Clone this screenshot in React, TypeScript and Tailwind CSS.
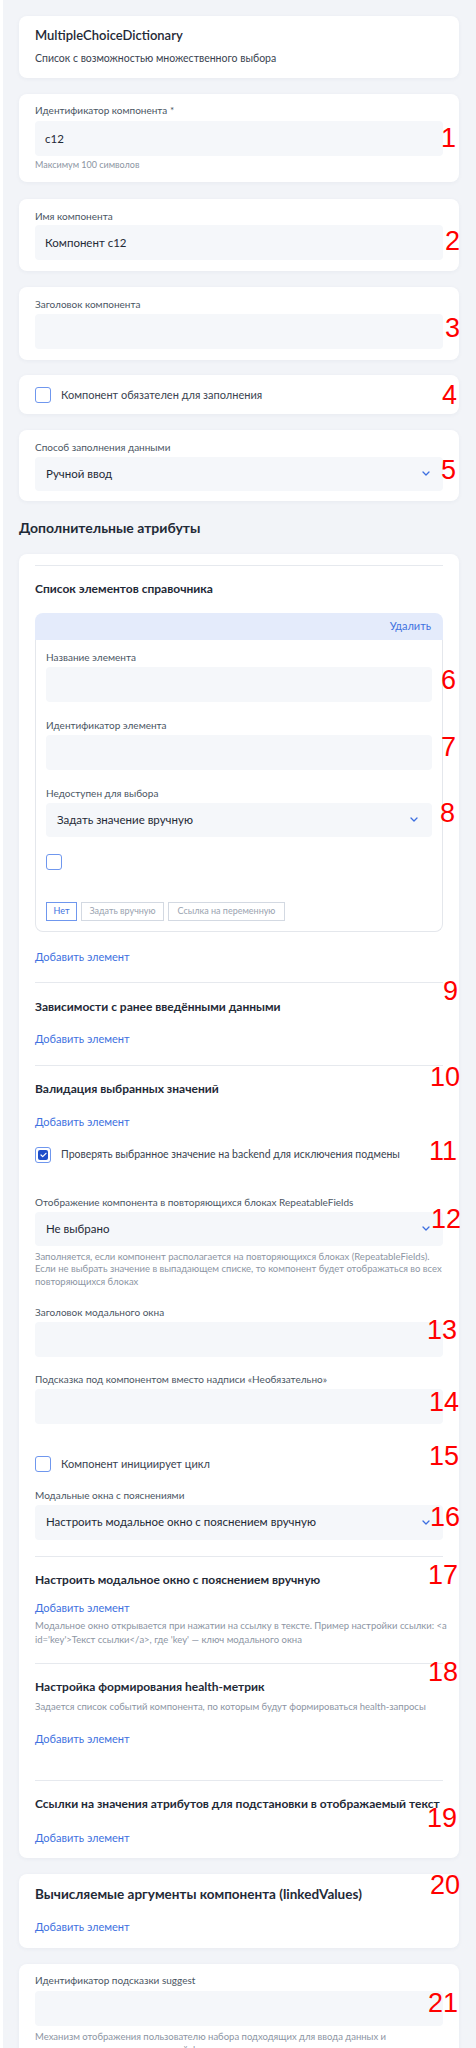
import React from "react";

function Label({ children, className = "" }: { children: React.ReactNode; className?: string }) {
  return <div className={"text-[10px] leading-[14px] text-[#4a5563] " + className}>{children}</div>;
}

function Input({ value, className = "" }: { value?: string; className?: string }) {
  return (
    <div className={"flex h-[35px] items-center rounded-[4px] bg-[#f5f7fa] px-[10px] text-[11.5px] text-[#1f2a37] " + className}>
      {value}
    </div>
  );
}

function Chevron() {
  return (
    <svg width="8" height="5" viewBox="0 0 8 5" fill="none">
      <path d="M1 1l3 3 3-3" stroke="#3d6fe0" strokeWidth="1.3" strokeLinecap="round" strokeLinejoin="round" />
    </svg>
  );
}

function Select({ value, className = "" }: { value: string; className?: string }) {
  return (
    <div className={"flex h-[34px] items-center justify-between rounded-[4px] bg-[#f5f7fa] pl-[11px] pr-[13px] text-[11.5px] text-[#1f2a37] " + className}>
      <span>{value}</span>
      <Chevron />
    </div>
  );
}

function Checkbox({ checked = false }: { checked?: boolean }) {
  return (
    <div className="flex h-[16px] w-[16px] shrink-0 items-center justify-center rounded-[3px] border border-[#6f97ee] bg-white">
      {checked && (
        <div className="flex h-[10px] w-[10px] items-center justify-center rounded-[2px] bg-[#1f4fc9]">
          <svg width="7" height="6" viewBox="0 0 7 6" fill="none">
            <path d="M1 3l1.7 1.7L6 1.3" stroke="white" strokeWidth="1.2" strokeLinecap="round" strokeLinejoin="round" />
          </svg>
        </div>
      )}
    </div>
  );
}

function AddLink({ className = "" }: { className?: string }) {
  return <div className={"text-[11px] leading-[16px] text-[#3f72e0] " + className}>Добавить элемент</div>;
}

function Heading({ children, className = "" }: { children: React.ReactNode; className?: string }) {
  return <div className={"text-[12px] font-bold leading-[16px] text-[#1f2a37] " + className}>{children}</div>;
}

function Hint({ children, className = "" }: { children: React.ReactNode; className?: string }) {
  return <div className={"text-[9.5px] text-[#8c95a3] " + className}>{children}</div>;
}

function Divider({ className = "" }: { className?: string }) {
  return <div className={"h-px bg-[#e6e9ee] " + className} />;
}

function Card({ children, className = "" }: { children: React.ReactNode; className?: string }) {
  return (
    <div className={"rounded-[8px] bg-white px-4 shadow-[0_1px_4px_rgba(30,50,90,0.05)] " + className}>{children}</div>
  );
}

export default function App() {
  return (
    <div className="relative min-h-[2048px] bg-white pl-[3px] font-[Lato,'Noto_Sans',sans-serif]">
      <div className="min-h-[2048px] bg-[#f2f4f8] pb-10 pl-4 pr-[17px] pt-4">
        {/* Card 1 */}
        <Card className="pb-[13px] pt-[10px]">
          <div className="text-[13px] font-semibold leading-[18px] text-[#1f2a37]">MultipleChoiceDictionary</div>
          <div className="mt-[7px] text-[10.5px] leading-[14px] text-[#3a4350]">Список с возможностью множественного выбора</div>
        </Card>

        {/* Card 2 */}
        <Card className="mt-4 pb-[11px] pt-[9px]">
          <Label>Идентификатор компонента *</Label>
          <Input value="c12" className="mt-[4px]" />
          <div className="mt-[3px] text-[9px] leading-[12px] text-[#8c95a3]">Максимум 100 символов</div>
        </Card>

        {/* Card 3 */}
        <Card className="mt-[17px] pb-[11px] pt-[10px]">
          <Label>Имя компонента</Label>
          <Input value="Компонент c12" className="mt-[2px]" />
        </Card>

        {/* Card 4 */}
        <Card className="mt-4 pb-[11px] pt-[10px]">
          <Label>Заголовок компонента</Label>
          <Input className="mt-[3px]" />
        </Card>

        {/* Card 5 */}
        <Card className="mt-[15px] flex items-center gap-[10px] pb-[10px] pt-[12px]">
          <Checkbox />
          <span className="text-[11px] text-[#3a4350]">Компонент обязателен для заполнения</span>
        </Card>

        {/* Card 6 */}
        <Card className="mt-4 pb-[10px] pt-[10px]">
          <Label>Способ заполнения данными</Label>
          <Select value="Ручной ввод" className="mt-[3px] h-[33px]" />
        </Card>

        <div className="mt-[17px] text-[14px] font-bold leading-[20px] text-[#1f2a37]">Дополнительные атрибуты</div>

        {/* Big card */}
        <Card className="mt-4 pb-[12px] pt-[11px]">
          <Divider />
          <Heading className="mt-[15px]">Список элементов справочника</Heading>

          <div className="mt-4 rounded-[8px]">
            <div className="flex h-[27px] items-center justify-end rounded-t-[8px] bg-[#e4ebfb] pr-[12px] text-[11px] text-[#3f72e0]">
              Удалить
            </div>
            <div className="rounded-b-[8px] border border-t-0 border-[#e4e7ec] px-[10px] pb-[10px] pt-[10px]">
              <Label>Название элемента</Label>
              <Input className="mt-[3px] h-[34px]" />
              <Label className="mt-4">Идентификатор элемента</Label>
              <Input className="mt-[3px] h-[34px]" />
              <Label className="mt-4">Недоступен для выбора</Label>
              <Select value="Задать значение вручную" className="mt-[3px] pr-[14px]" />
              <div className="mt-[17px]">
                <Checkbox />
              </div>
              <div className="mt-[32px] flex gap-[4px]">
                <div className="flex h-[19px] w-[31px] items-center justify-center border border-[#6f97ee] text-[9px] text-[#3f72e0]">
                  Нет
                </div>
                <div className="flex h-[19px] w-[83px] items-center justify-center border border-[#d3d9e2] text-[9px] text-[#9aa3b0]">
                  Задать вручную
                </div>
                <div className="flex h-[19px] w-[117px] items-center justify-center border border-[#d3d9e2] text-[9px] text-[#9aa3b0]">
                  Ссылка на переменную
                </div>
              </div>
            </div>
          </div>

          <AddLink className="mt-[17px]" />
          <Divider className="mt-[17px]" />

          <Heading className="mt-[16px]">Зависимости с ранее введёнными данными</Heading>
          <AddLink className="mt-[16px]" />
          <Divider className="mt-[18px]" />

          <Heading className="mt-[15px]">Валидация выбранных значений</Heading>
          <AddLink className="mt-[17px]" />
          <div className="mt-[17px] flex items-center gap-[10px]">
            <Checkbox checked />
            <span className="text-[10.5px] text-[#3a4350]">Проверять выбранное значение на backend для исключения подмены</span>
          </div>

          <Label className="mt-[32px]">Отображение компонента в повторяющихся блоках RepeatableFields</Label>
          <Select value="Не выбрано" className="mt-[3px]" />
          <Hint className="mt-[5px] whitespace-nowrap leading-[12.5px]">
            Заполняется, если компонент располагается на повторяющихся блоках (RepeatableFields).
            <br />
            Если не выбрать значение в выпадающем списке, то компонент будет отображаться во всех
            <br />
            повторяющихся блоках
          </Hint>

          <Label className="mt-[17px]">Заголовок модального окна</Label>
          <Input className="mt-[3px] h-[34px]" />
          <Label className="mt-[15px]">Подсказка под компонентом вместо надписи «Необязательно»</Label>
          <Input className="mt-[3px] h-[34px]" />

          <div className="mt-[32px] flex items-center gap-[10px]">
            <Checkbox />
            <span className="text-[11px] text-[#3a4350]">Компонент инициирует цикл</span>
          </div>

          <Label className="mt-[15px]">Модальные окна с пояснениями</Label>
          <Select value="Настроить модальное окно с пояснением вручную" className="mt-[3px] h-[35px]" />
          <Divider className="mt-[16px]" />

          <Heading className="mt-[15px]">Настроить модальное окно с пояснением вручную</Heading>
          <AddLink className="mt-[12px]" />
          <Hint className="mt-[3px] whitespace-nowrap leading-[14px]">
            Модальное окно открывается при нажатии на ссылку в тексте. Пример настройки ссылки: &lt;a
            <br />
            id='key'&gt;Текст ссылки&lt;/a&gt;, где 'key' — ключ модального окна
          </Hint>
          <Divider className="mt-[16px]" />

          <Heading className="mt-[15px]">Настройка формирования health-метрик</Heading>
          <Hint className="mt-[5px] leading-[14px]">Задается список событий компонента, по которым будут формироваться health-запросы</Hint>
          <AddLink className="mt-[17px]" />
          <Divider className="mt-[33px]" />

          <Heading className="mt-[15px] whitespace-nowrap">Ссылки на значения атрибутов для подстановки в отображаемый текст</Heading>
          <AddLink className="mt-[18px]" />
        </Card>

        {/* linkedValues card */}
        <Card className="mt-4 pb-[13px] pt-[10px]">
          <div className="text-[13.5px] font-bold leading-[20px] text-[#1f2a37]">Вычисляемые аргументы компонента (linkedValues)</div>
          <AddLink className="mt-[15px]" />
        </Card>

        {/* suggest card */}
        <Card className="mt-4 pb-[12px] pt-[9px]">
          <Label>Идентификатор подсказки suggest</Label>
          <Input className="mt-[4px] h-[34px]" />
          <Hint className="mt-[4px] leading-[13px]">
            Механизм отображения пользователю набора подходящих для ввода данных и
            <br />
            автоматическое заполнение полей формы этими данными
          </Hint>
        </Card>
      </div>

      {/* Red annotation numbers */}
      <div className="pointer-events-none font-['Liberation_Sans',Arial,sans-serif] text-[27px] leading-none text-[#ff0000]">
        <span className="absolute right-[20px] top-[125px]">1</span>
        <span className="absolute right-[16px] top-[228px]">2</span>
        <span className="absolute right-[16px] top-[315px]">3</span>
        <span className="absolute right-[19px] top-[382px]">4</span>
        <span className="absolute right-[20px] top-[457px]">5</span>
        <span className="absolute right-[20px] top-[667px]">6</span>
        <span className="absolute right-[20px] top-[734px]">7</span>
        <span className="absolute right-[21px] top-[800px]">8</span>
        <span className="absolute right-[18px] top-[978px]">9</span>
        <span className="absolute right-[16px] top-[1064px]">10</span>
        <span className="absolute right-[19px] top-[1138px]">11</span>
        <span className="absolute right-[15px] top-[1206px]">12</span>
        <span className="absolute right-[19px] top-[1317px]">13</span>
        <span className="absolute right-[17px] top-[1389px]">14</span>
        <span className="absolute right-[17px] top-[1443px]">15</span>
        <span className="absolute right-[16px] top-[1504px]">16</span>
        <span className="absolute right-[18px] top-[1562px]">17</span>
        <span className="absolute right-[18px] top-[1659px]">18</span>
        <span className="absolute right-[19px] top-[1805px]">19</span>
        <span className="absolute right-[16px] top-[1872px]">20</span>
        <span className="absolute right-[18px] top-[1990px]">21</span>
      </div>
    </div>
  );
}
